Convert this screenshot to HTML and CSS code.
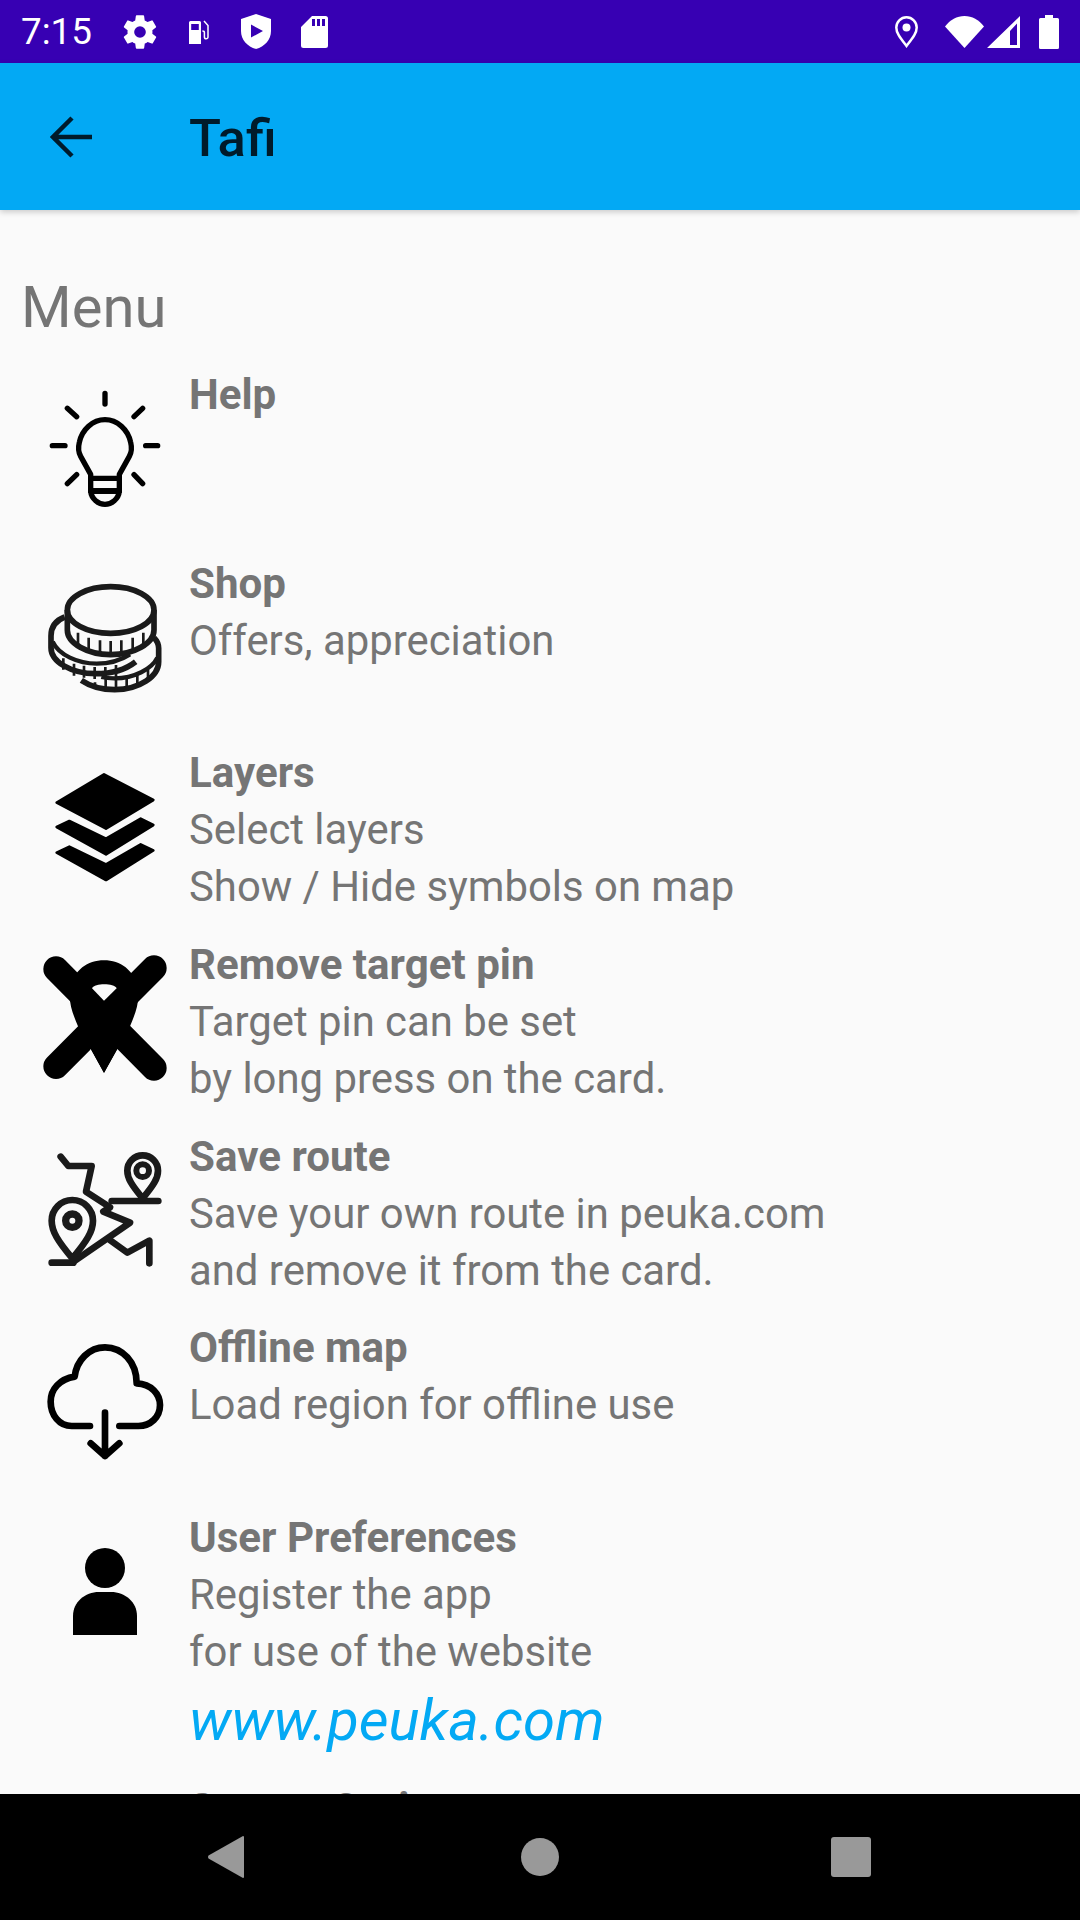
FILE: index.html
```html
<!DOCTYPE html>
<html lang="en">
<head>
<meta charset="utf-8">
<title>Tafi</title>
<link rel="stylesheet" href="styles.css">
</head>
<body>
<div class="screen">
  <header class="status">
    <span class="time">7:15</span>
    <svg class="si gear" viewBox="0 0 24 24"><path fill="#fff" fill-rule="evenodd" d="M19.4 13c.05-.33.07-.66.07-1s-.02-.67-.07-1l2.1-1.65a.5.5 0 0 0 .12-.64l-2-3.46a.5.5 0 0 0-.61-.22l-2.49 1a7.3 7.3 0 0 0-1.69-.98l-.38-2.65A.49.49 0 0 0 14 2h-4a.49.49 0 0 0-.49.42l-.38 2.65c-.61.25-1.17.59-1.69.98l-2.49-1a.5.5 0 0 0-.61.22l-2 3.46a.49.49 0 0 0 .12.64L4.56 11a7.9 7.9 0 0 0 0 2l-2.1 1.65a.5.5 0 0 0-.12.64l2 3.46c.12.22.39.3.61.22l2.49-1c.52.4 1.08.73 1.69.98l.38 2.65c.03.24.24.42.49.42h4c.25 0 .46-.18.49-.42l.38-2.65c.61-.25 1.17-.59 1.69-.98l2.49 1c.23.09.49 0 .61-.22l2-3.46a.5.5 0 0 0-.12-.64L19.4 13zM12 15.5a3.5 3.5 0 1 1 0-7 3.500 3.500 0 0 1 0 7z"/></svg>
    <svg class="si fuel" viewBox="0 0 22 24"><path fill="#fff" fill-rule="evenodd" d="M1 2.500A1.500 1.500 0 0 1 2.500 1h9A1.500 1.500 0 0 1 13 2.500V24H1zM3.200 4v6h7.600V4z"/><path fill="none" stroke="#fff" stroke-width="1.500" d="M16 1l4 4.500V17a1.800 1.800 0 0 1-3.600 0v-4.500c0-1-1-1.500-2-1.500"/></svg>
    <svg class="si shield" viewBox="0 0 30 35"><path fill="#fff" fill-rule="evenodd" d="M15 0l15 5v12c0 9-6.500 15.500-15 18C6.500 32.500 0 26 0 17V5zM10 10.500v13l12-6.500z"/></svg>
    <svg class="si sd" viewBox="0 0 27 32"><path fill="#fff" fill-rule="evenodd" d="M11 0h13.500A2.500 2.500 0 0 1 27 2.500v27a2.500 2.500 0 0 1-2.500 2.500h-22A2.500 2.500 0 0 1 0 29.500V11zM11 3v7h3V3zM16 3v7h3V3zM21 3v7h3V3z"/></svg>
    <span class="spring"></span>
    <svg class="si pin" viewBox="0 0 23 32"><path fill="none" stroke="#fff" stroke-width="2.500" d="M11.500 30C5 21.500 1.300 17 1.300 11.500a10.200 10.200 0 0 1 20.400 0C21.700 17 18 21.500 11.500 30z"/><circle cx="11.500" cy="11.500" r="4" fill="#fff"/></svg>
    <svg class="si wifi" viewBox="0 0 39 32"><path fill="#fff" d="M0 10.500C5 4 12 0 19.500 0S34 4 39 10.500L19.500 32z"/></svg>
    <svg class="si signal" viewBox="0 0 33 32"><path fill="#fff" fill-rule="evenodd" d="M33 0v32H0zM30 7.500L23 15v14h7z"/></svg>
    <svg class="si battery" viewBox="0 0 20 34"><path fill="#fff" d="M6 0h8v3h4.500A1.500 1.500 0 0 1 20 4.500v28a1.500 1.500 0 0 1-1.500 1.500h-17A1.500 1.500 0 0 1 0 32.500v-28A1.500 1.500 0 0 1 1.500 3H6z"/></svg>
  </header>

  <div class="appbar">
    <svg class="back" viewBox="0 0 42 42"><path fill="none" stroke="#001b2b" stroke-width="4.500" d="M42 21H4M22 2L3 21l19 19"/></svg>
    <h1 class="title">Tafi</h1>
  </div>

  <main class="content">
    <h2 class="heading">Menu</h2>
    <ul class="menu">
      <li class="item short">
        <div class="icon">
          <svg class="ic" viewBox="60 39 390 390" fill="none" stroke="#000" stroke-width="16" stroke-linecap="round" stroke-linejoin="round"><path d="M255 67v32M142 112l28 25M368 112l-26 25M97 224h38M377 224h36M142 338l28-27M368 338l-26-27"/><path d="M212 360V310L182 256C172 238 176 222 178 214 186 176 218 146 255 146s69 30 77 68c2 8 6 24-4 42L298 310v50z"/><path d="M212 322h86M212 360h86"/><path d="M212 360c2 24 24 40 43 40s41-16 43-40z"/></svg>
        </div>
        <div class="text"><div class="name">Help</div></div>
      </li>
      <li class="item short">
        <div class="icon">
          <svg class="ic" viewBox="60 606 390 390" fill="none" stroke="#1a1a1a" stroke-width="17" stroke-linejoin="round"><ellipse cx="272" cy="717" rx="130" ry="70"/><path d="M142 717v60c0 40 60 74 130 74s130-34 130-74v-60"/><path d="M174 785v42M206 800v44M240 808v44M272 810v44M304 808v44M338 800v44M370 785v42" stroke-width="8"/><path d="M134 738C108 748 93 768 93 795v35c0 42 60 78 134 78 50 0 92-14 120-36"/><path d="M98 812c18 40 76 66 132 66 36 0 72-10 100-28" stroke-width="13"/><path d="M130 862v34M162 878v36M192 884v36M224 888v36M256 888v36M288 882v36" stroke-width="8"/><path d="M402 800c10 10 14 20 14 32v40c0 44-58 84-132 84-40 0-76-12-100-28"/><path d="M412 860c-16 34-70 62-128 62-14 0-28-1-40-4" stroke-width="13"/><path d="M225 934v20M257 924v36M288 924v36M320 918v36M352 912v36M384 896v36" stroke-width="8"/></svg>
        </div>
        <div class="text"><div class="name">Shop</div><div class="sub">Offers, appreciation</div></div>
      </li>
      <li class="item">
        <div class="icon">
          <svg class="ic" viewBox="60 33 390 390" fill="#000" stroke="#000" stroke-width="8" stroke-linejoin="round"><path d="M252 70L400 147 258 233 110 155z"/><path d="M148 210L258 263 362 203 400 222 258 310 110 228z"/><path d="M148 287L258 340 362 280 400 298 258 387 110 305z"/></svg>
        </div>
        <div class="text"><div class="name">Layers</div><div class="sub">Select layers</div><div class="sub">Show / Hide symbols on map</div></div>
      </li>
      <li class="item tall">
        <div class="icon">
          <svg class="ic" viewBox="60 610 390 390"><path d="M252 632c50 0 90 30 100 80 8 40-2 70-22 118l-38 68-40 72-40-72-38-68c-20-48-30-78-22-118 10-50 50-80 100-80z"/><path fill="none" stroke="#000" stroke-width="76" stroke-linecap="round" d="M108 658L402 955M402 655L108 950"/><path fill="#fafafa" d="M216 716c8-16 66-16 74 0l-38 37z"/><path d="M190 860h124l-62 110z"/><path fill="#fafafa" d="M212 897l40 73 40-72 20 100H190z"/><path d="M212 897l40 73 40-72z"/></svg>
        </div>
        <div class="text"><div class="name">Remove target pin</div><div class="sub">Target pin can be set</div><div class="sub">by long press on the card.</div></div>
      </li>
      <li class="item">
        <div class="icon">
          <svg class="ic" viewBox="60 45 390 390" fill="none" stroke="#1a1a1a" stroke-width="20" stroke-linecap="round" stroke-linejoin="round"><path d="M122 80l23 28h70l-17 77 72 47-20 13 80 33-170 117"/><path d="M95 398h65"/><path d="M275 213h140"/><path d="M272 332l50 36 66-36v68"/><path d="M368 205C335 165 322 145 322 122a46 46 0 0 1 92 0c0 23-13 43-46 83z"/><circle cx="368" cy="122" r="19" stroke-width="18"/><path d="M157 385C115 335 95 305 95 272a62 62 0 0 1 124 0c0 33-20 63-62 113z"/><circle cx="157" cy="272" r="20" stroke-width="22"/></svg>
        </div>
        <div class="text"><div class="name">Save route</div><div class="sub">Save your own route in peuka.com</div><div class="sub">and remove it from the card.</div></div>
      </li>
      <li class="item compact">
        <div class="icon">
          <svg class="ic" viewBox="60 621 390 390" fill="none" stroke="#000" stroke-width="20" stroke-linecap="round" stroke-linejoin="round"><path d="M210 888H155C118 888 92 855 92 815c0-38 28-68 72-75C170 690 208 652 255 652c52 0 95 44 95 108 44 2 70 32 70 65 0 36-28 63-65 63H298"/><path d="M255 848v130M212 940l43 38 43-38"/></svg>
        </div>
        <div class="text"><div class="name">Offline map</div><div class="sub">Load region for offline use</div></div>
      </li>
      <li class="item user">
        <div class="icon">
          <svg class="person" viewBox="0 0 64 87"><circle cx="32" cy="20" r="20"/><path d="M0 87V68c0-14 12-24 26-24h12c14 0 26 10 26 24v19z"/></svg>
        </div>
        <div class="text">
          <div class="name">User Preferences</div><div class="sub">Register the app</div><div class="sub">for use of the website</div>
          <a class="link">www.peuka.com</a>
        </div>
      </li>
      <li class="item">
        <div class="icon"></div>
        <div class="text"><div class="name">Screen Options</div></div>
      </li>
    </ul>
  </main>

  <nav class="nav">
    <svg class="nb" viewBox="0 0 37 42"><path fill="#999" d="M36 0a1 1 0 0 1 1 1v40a1 1 0 0 1-1 1L1.500 22.500a2.500 2.500 0 0 1 0-3z"/></svg>
    <span class="dot"></span>
    <span class="sq"></span>
  </nav>
</div>
</body>
</html>
```

FILE: styles.css
```css
* { box-sizing: border-box; }
html, body { margin: 0; padding: 0; }
body { font-family: Roboto, "Liberation Sans", sans-serif; background: #fafafa; }
.screen { width: 1080px; height: 1920px; display: flex; flex-direction: column; overflow: hidden; }

.status { height: 63px; flex: none; background: #3700b3; color: #fff; display: flex; align-items: center; padding: 0 21px; }
.time { font-size: 36.75px; width: 99px; }
.si { display: block; flex: none; }
.gear { width: 40px; height: 40px; margin-right: 28px; }
.fuel { width: 22px; height: 24px; margin-right: 31px; }
.shield { width: 30px; height: 35px; margin-right: 30px; }
.sd { width: 27px; height: 32px; }
.spring { flex: 1; }
.pin { width: 23px; height: 32px; margin-right: 27px; }
.wifi { width: 39px; height: 32px; margin-right: 3px; }
.signal { width: 33px; height: 32px; margin-right: 19px; }
.battery { width: 20px; height: 34px; }

.appbar { height: 147px; flex: none; background: #03a9f4; display: flex; align-items: center; padding-left: 50px; box-shadow: 0 2px 6px rgba(0,0,0,.2); position: relative; z-index: 1; }
.back { width: 42px; height: 42px; margin-right: 97px; }
.title { margin: 2px 0 0; font-size: 52.5px; font-weight: 500; color: #001b2b; }

.content { flex: 1; min-height: 0; overflow: hidden; padding: 64px 0 0 21px; color: #757575; }
.heading { margin: 0; font-size: 58px; font-weight: 400; line-height: 66px; color: #757575; }
.menu { list-style: none; margin: 26px 0 0; padding: 0; }
.item { display: flex; height: 191.5px; }
.item.short { height: 189px; }
.item.tall { height: 192px; }
.item.compact { height: 189.5px; }
.item.user { height: 271px; }
.icon { width: 168px; flex: none; height: 165px; display: flex; align-items: center; justify-content: center; }
.ic { width: 130px; height: 130px; display: block; flex: none; }
.person { width: 64px; height: 87px; display: block; flex: none; }
.text { font-size: 42px; line-height: 57px; }
.name { font-weight: 700; font-size: 42.1px; }
.sub { font-size: 41.85px; }
.link { display: block; font-size: 58px; font-style: italic; line-height: 80px; color: #03a9f4; }

.nav { height: 126px; flex: none; background: #000; display: flex; align-items: center; padding-left: 207px; }
.nb { width: 37px; height: 42px; margin-right: 277px; }
.dot { width: 38px; height: 38px; border-radius: 50%; background: #999; margin-right: 272px; }
.sq { width: 40px; height: 40px; border-radius: 3px; background: #999; }
```
